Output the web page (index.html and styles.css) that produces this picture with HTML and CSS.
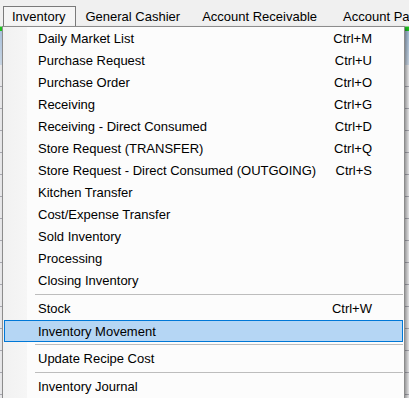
FILE: index.html
```html
<!DOCTYPE html>
<html lang="en">
  <head>
    <meta charset="UTF-8" />
    <title>Inventory menu</title>
    <link rel="stylesheet" href="styles.css">
  </head>
  <body>

    <div class="menubar">
      <div class="top open">Inventory</div>
      <div class="top">General Cashier</div>
      <div class="top recv">Account Receivable</div>
      <div class="top last">Account Payable</div>
    </div>

    <div class="workspace">
      <div class="toolbar"></div>
      <div class="header"></div>
      <div class="grid"></div>
    </div>

    <div class="dropdown">
      <div class="item"><span>Daily Market List</span><span class="key">Ctrl+M</span></div>
      <div class="item"><span>Purchase Request</span><span class="key">Ctrl+U</span></div>
      <div class="item"><span>Purchase Order</span><span class="key">Ctrl+O</span></div>
      <div class="item"><span>Receiving</span><span class="key">Ctrl+G</span></div>
      <div class="item"><span>Receiving - Direct Consumed</span><span class="key">Ctrl+D</span></div>
      <div class="item"><span>Store Request (TRANSFER)</span><span class="key">Ctrl+Q</span></div>
      <div class="item"><span>Store Request - Direct Consumed (OUTGOING)</span><span class="key">Ctrl+S</span></div>
      <div class="item"><span>Kitchen Transfer</span><span class="key"></span></div>
      <div class="item"><span>Cost/Expense Transfer</span><span class="key"></span></div>
      <div class="item"><span>Sold Inventory</span><span class="key"></span></div>
      <div class="item"><span>Processing</span><span class="key"></span></div>
      <div class="item"><span>Closing Inventory</span><span class="key"></span></div>
      <div class="sep"></div>
      <div class="item"><span>Stock</span><span class="key">Ctrl+W</span></div>
      <div class="item active"><span>Inventory Movement</span><span class="key"></span></div>
      <div class="sep"></div>
      <div class="item"><span>Update Recipe Cost</span><span class="key"></span></div>
      <div class="sep"></div>
      <div class="item"><span>Inventory Journal</span><span class="key"></span></div>
    </div>

  </body>
</html>
```

FILE: styles.css
```css
* { font-family: 'Liberation Sans', Arial, sans-serif; box-sizing: border-box; }
body { margin: 0; background: #f0f0f0; color: #000; font-size: 13px; overflow: hidden; height: 398px; }

.menubar { display: flex; align-items: flex-end; height: 26px; padding-left: 3px; background: #f0f0f0; white-space: nowrap; overflow: hidden; }
.top { height: 19px; line-height: 19px; padding: 0 9px; flex: none; }
.top.open { border: 1px solid #7a7a7a; border-bottom: none; padding: 0 10px 0 8px; background: #f5f5f5; height: 20px; }
.top.recv { margin-left: 4px; }
.top.last { margin-left: 8px; }

.workspace { height: 372px; display: flex; flex-direction: column; }
.toolbar { height: 5px; background: #1fc41f; border-top: 1px solid #8fd88f; }
.header { height: 34px; background: linear-gradient(#aac3de, #c9d6e4); }
.grid { flex: 1; background: repeating-linear-gradient(#e8e8ea 0, #e8e8ea 21px, #a8a8b0 21px, #a8a8b0 22px); }

.dropdown {
  position: absolute;
  left: 2px;
  top: 26px;
  width: 403px;
  padding: 1px 0 0;
  border: 1px solid #8c8c8c;
  border-bottom: none;
  background: linear-gradient(to right, #f1f1f1 0, #f6f6f6 24px, #fcfcfc 24px);
  box-shadow: 2px 2px 3px rgba(0,0,0,.35);
}

.item {
  display: flex;
  align-items: center;
  height: 22px;
  padding: 0 32px 1px 35px;
  white-space: nowrap;
}
.item span:first-child { flex: 1; }
.item .key { text-align: right; }
.item.active { background: #b5d6f4; border: 1px solid #0078d7; margin: 0 1px; padding: 0 30px 0 33px; }

.sep { height: 6px; padding: 2px 1px 0 32px; }
.sep::after { content: ''; display: block; height: 1px; background: #bdbdbd; }
```
